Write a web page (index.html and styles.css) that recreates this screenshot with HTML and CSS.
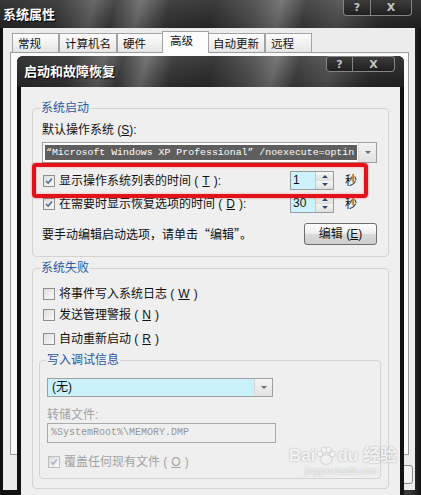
FILE: index.html
```html
<!DOCTYPE html>
<html lang="zh-CN">
<head>
    <meta charset="UTF-8">
    <meta name="viewport" content="width=device-width, initial-scale=1.0">
    <title>系统属性</title>
    <link rel="stylesheet" href="styles.css">
</head>
<body>
    <!-- janela de fundo: Propriedades do sistema -->
    <div class="win">
        <div class="titlebar">
            <span class="title">系统属性</span>
            <div class="caption">
                <span class="cap-btn help">?</span>
                <span class="cap-btn close">X</span>
            </div>
        </div>
        <div class="client">
            <div class="tabs">
                <span class="tab">常规</span>
                <span class="tab">计算机名</span>
                <span class="tab">硬件</span>
                <span class="tab active">高级</span>
                <span class="tab">自动更新</span>
                <span class="tab">远程</span>
            </div>
            <div class="panel"></div>
            <div class="foot"><span class="foot-btn"></span></div>
        </div>
    </div>

    <!-- dialogo por cima -->
    <div class="dialog">
        <div class="dlg-title">
            <span class="title">启动和故障恢复</span>
            <div class="caption">
                <span class="cap-btn help">?</span>
                <span class="cap-btn close">X</span>
            </div>
        </div>

        <div class="dlg-body">
            <fieldset class="group g1">
                <legend>系统启动</legend>
                <div class="lbl">默认操作系统 (<u>S</u>):</div>
                <div class="combo os">
                    <span class="combo-val">“Microsoft Windows XP Professional” /noexecute=optin</span>
                    <span class="combo-arrow"><i class="tri"></i></span>
                </div>

                <div class="row r1">
                    <span class="check">
                        <span class="box"><svg viewBox="0 0 12 12"><polyline points="2.5,6 5,8.5 9.5,3"/></svg></span>
                        显示操作系统列表的时间 (<u>T</u>):
                    </span>
                    <span class="spin"><span class="val">1</span><span class="arrows"><i class="up"></i><i class="down"></i></span></span>
                    <span class="unit">秒</span>
                </div>
                <div class="row r2">
                    <span class="check">
                        <span class="box"><svg viewBox="0 0 12 12"><polyline points="2.5,6 5,8.5 9.5,3"/></svg></span>
                        在需要时显示恢复选项的时间 (<u>D</u>):
                    </span>
                    <span class="spin"><span class="val">30</span><span class="arrows"><i class="up"></i><i class="down"></i></span></span>
                    <span class="unit">秒</span>
                </div>

                <div class="edit-row">
                    <span>要手动编辑启动选项，请单击<span class="cjk">“编辑”</span>。</span>
                    <span class="btn-edit">编辑 (<u>E</u>)</span>
                </div>
            </fieldset>

            <fieldset class="group g2">
                <legend>系统失败</legend>
                <div class="row cb1">
                    <span class="check"><span class="box"></span>将事件写入系统日志 (<u>W</u>)</span>
                </div>
                <div class="row cb2">
                    <span class="check"><span class="box"></span>发送管理警报 (<u>N</u>)</span>
                </div>
                <div class="row cb3">
                    <span class="check"><span class="box"></span>自动重新启动 (<u>R</u>)</span>
                </div>

                <fieldset class="group sub">
                    <legend>写入调试信息</legend>
                    <div class="combo dump-type">
                        <span class="combo-val">(无)</span>
                        <span class="combo-arrow"><i class="tri"></i></span>
                    </div>
                    <div class="lbl off">转储文件:</div>
                    <div class="field">%SystemRoot%\MEMORY.DMP</div>
                    <div class="row cb4">
                        <span class="check off">
                            <span class="box"><svg viewBox="0 0 12 12"><polyline points="2.5,6 5,8.5 9.5,3"/></svg></span>
                            覆盖任何现有文件 (<u>O</u>)
                        </span>
                    </div>
                </fieldset>
            </fieldset>
        </div>

        <!-- marcacao vermelha do print -->
        <div class="mark"></div>

        <div class="watermark">
            <span class="wm-logo">Bai<svg class="paw" viewBox="0 0 20 20">
                <circle cx="4" cy="8" r="2.2"/><circle cx="8" cy="4" r="2.2"/>
                <circle cx="12.5" cy="4" r="2.2"/><circle cx="16.5" cy="8" r="2.2"/>
                <ellipse cx="10.2" cy="13.5" rx="5" ry="4.2"/>
            </svg>du 经验</span>
            <small>jingyan.baidu.com</small>
        </div>
    </div>
</body>
</html>
```

FILE: styles.css
```css
* {
    box-sizing: border-box;
}

body {
    margin: 0;
    width: 421px;
    height: 495px;
    overflow: hidden;
    position: relative;
    background: #1c1c1c;
    font-family: "Liberation Sans", "Noto Sans CJK SC", sans-serif;
    font-size: 12px;
    line-height: 14px;
    color: #111;
}

u {
    text-decoration: underline;
}

.cjk {
    font-family: "Noto Sans CJK SC", sans-serif;
}

/* ---------- janela de fundo ---------- */

.win {
    height: 495px;
    display: flex;
    flex-direction: column;
    background: linear-gradient(90deg, #101010 0%, #262626 50%, #3a3a3a 97%, #111 100%);
}

.titlebar,
.dlg-title {
    display: flex;
    justify-content: space-between;
    align-items: flex-start;
    background:
        linear-gradient(180deg, rgba(255, 255, 255, 0.08), rgba(0, 0, 0, 0.15)),
        linear-gradient(103deg, #262626 0%, #333 14%, #5d5d5d 22%, #3a3a3a 27%, #6a6a6a 33%, #333 40%,
            #2b2b2b 50%, #4d4d4d 60%, #6d6d6d 66%, #3b3b3b 72%, #505050 80%, #2a2a2a 90%, #222 100%);
}

.titlebar {
    height: 28px;
    padding: 0 9px 0 3px;
}

.title {
    margin-top: 7px;
    font-family: "Noto Sans CJK SC", sans-serif;
    font-weight: bold;
    font-size: 13px;
    color: #fff;
    text-shadow: 1px 1px 1px #000;
}

.caption {
    display: flex;
}

.cap-btn {
    height: 16px;
    border: 1px solid #858585;
    border-top: none;
    background: linear-gradient(#3c3c3c, #1f1f1f);
    color: #c4c4c4;
    font-family: "DejaVu Sans", sans-serif;
    font-weight: bold;
    font-size: 11px;
    line-height: 15px;
    text-align: center;
}

.cap-btn.help {
    width: 28px;
    border-radius: 0 0 0 4px;
}

.cap-btn.close {
    width: 41px;
    border-left: none;
    border-radius: 0 0 4px 0;
}

.client {
    flex: 1;
    margin: 0 6px 5px 3px;
    padding: 0 6px 0 7px;
    background: #ececec;
    display: flex;
    flex-direction: column;
}

.tabs {
    display: flex;
    align-items: flex-end;
    padding: 3px 0 0 2px;
    height: 25px;
}

.tab {
    height: 19px;
    min-width: 47px;
    margin-bottom: 1px;
    padding: 0 5px;
    border: 1px solid #a3a3a3;
    border-bottom: none;
    background: linear-gradient(#fdfdfd, #e6e6e6);
    font-family: "Noto Sans CJK SC", sans-serif;
    font-size: 11.5px;
    line-height: 18px;
    white-space: nowrap;
}

.tab.active {
    height: 22px;
    margin: 0 -2px;
    position: relative;
    z-index: 1;
    background: #fcfcfc;
    padding-left: 7px;
    line-height: 16px;
}

.panel {
    height: 403px;
    margin-top: -1px;
    border: 1px solid #9c9c9c;
    background: #fcfcfc;
}

.foot {
    display: flex;
    justify-content: flex-end;
    margin: 10px -4px 0 0;
}

.foot-btn {
    width: 70px;
    height: 19px;
    border: 1px solid #8a8a8a;
    border-radius: 3px;
    background: #f2f2f2;
}

/* ---------- dialogo ---------- */

.dialog {
    position: absolute;
    left: 17px;
    top: 56px;
    width: 387px;
    height: 445px;
    padding: 0 4px;
    border-radius: 6px 6px 0 0;
    background: #121212;
    display: flex;
    flex-direction: column;
    overflow: hidden;
}

.dlg-title {
    height: 31px;
    margin: 0 -4px;
    padding: 0 9px 0 7px;
}

.dlg-title .title {
    margin-top: 8px;
}

.dlg-title .cap-btn {
    border-top: 1px solid #858585;
}

.dlg-title .cap-btn.help {
    width: 27px;
    border-radius: 3px 0 0 4px;
}

.dlg-title .cap-btn.close {
    width: 42px;
    border-radius: 0 3px 4px 0;
}

.dlg-body {
    flex: 1;
    padding: 0 11px;
    background: #efefef;
}

.group {
    margin: 14px 0 0;
    padding: 0 10px 11px 9px;
    border: 1px solid #d3d3d3;
    border-radius: 4px;
    min-width: 0;
}

.group legend {
    padding: 0 1px;
    margin-left: -2px;
    color: #2858a6;
    line-height: 14px;
}

.g2 {
    margin-top: 4px;
    padding-bottom: 9px;
}

.sub {
    margin: 7px -3px 0;
    padding: 0 7px 9px 7px;
}

.sub legend {
    margin-left: -1px;
}

.lbl {
    margin-top: 8px;
}

.lbl.off {
    margin-top: 11px;
    color: #a2a2a2;
}

.combo {
    display: flex;
    border: 1px solid #a0a0a0;
    background: #fff;
}

.combo.os {
    margin-top: 5px;
    width: 335px;
    height: 21px;
}

.combo.os .combo-val {
    flex: 1;
    margin: 2px 1px 2px 2px;
    padding-left: 1px;
    background: #5e5e5e;
    color: #fff;
    font-family: "Liberation Mono", monospace;
    font-size: 9.9px;
    line-height: 15px;
    white-space: nowrap;
    overflow: hidden;
}

.combo-arrow {
    width: 18px;
    display: flex;
    justify-content: center;
    align-items: center;
    background: linear-gradient(#f3f3f3, #e2e2e2);
    border-left: 1px solid #d6d6d6;
}

.tri {
    border-left: 3px solid transparent;
    border-right: 3px solid transparent;
    border-top: 3px solid #6a6a6a;
}

.combo.dump-type {
    margin-top: 11px;
    width: 226px;
    height: 19px;
    background: #c8f1f9;
}

.dump-type .combo-val {
    flex: 1;
    padding-left: 4px;
    line-height: 17px;
}

.field {
    margin-top: 1px;
    width: 229px;
    height: 20px;
    padding-left: 3px;
    border: 1px solid #a9a9a9;
    color: #959595;
    font-family: "Liberation Mono", monospace;
    font-size: 10px;
    line-height: 18px;
}

.row {
    display: flex;
    align-items: center;
    height: 14px;
}

.r1,
.r2 {
    height: 19px;
}

.r1 {
    margin-top: 8px;
}

.r2 {
    margin-top: 4px;
}

.cb1 {
    margin-top: 12px;
}

.cb2 {
    margin-top: 7px;
}

.cb3 {
    margin-top: 10px;
}

.cb4 {
    margin-top: 12px;
}

.check {
    display: flex;
    align-items: center;
    gap: 4px;
    white-space: nowrap;
}

.box {
    width: 12px;
    height: 12px;
    margin-left: 1px;
    border: 1px solid #8e8e8e;
    background: linear-gradient(135deg, #dcdcdc, #fbfbfb);
}

.box svg {
    display: block;
    width: 10px;
    height: 10px;
}

.box polyline {
    fill: none;
    stroke: #51699a;
    stroke-width: 1.8;
}

.check.off {
    color: #a2a2a2;
}

.check.off .box {
    border-color: #bdbdbd;
}

.check.off .box polyline {
    stroke: #a4b2c9;
}

.spin {
    margin-left: auto;
    width: 44px;
    height: 19px;
    display: flex;
    border: 1px solid #9b9b9b;
    background: #ccf3fb;
}

.spin .val {
    flex: 1;
    padding-left: 2px;
    line-height: 17px;
}

.arrows {
    width: 18px;
    display: flex;
    flex-direction: column;
    border-left: 1px solid #c9c9c9;
}

.arrows i {
    flex: 1;
    display: flex;
    justify-content: center;
    align-items: center;
    background: linear-gradient(#f7f7f7, #dedede);
}

.arrows i::after {
    content: "";
    border-left: 3px solid transparent;
    border-right: 3px solid transparent;
}

.arrows .up::after {
    border-bottom: 3px solid #33466b;
}

.arrows .down::after {
    border-top: 3px solid #33466b;
}

.unit {
    width: 33px;
    margin-left: 11px;
}

.edit-row {
    margin-top: 10px;
    height: 22px;
    display: flex;
    justify-content: space-between;
    align-items: center;
}

.btn-edit {
    width: 73px;
    height: 22px;
    margin-right: 1px;
    border: 1px solid #6e6e6e;
    border-radius: 3px;
    background: linear-gradient(#fefefe, #ececec 50%, #dadada 51%, #cdcdcd);
    text-align: center;
    line-height: 20px;
}

.mark {
    position: absolute;
    left: 15px;
    top: 107px;
    width: 336px;
    height: 35px;
    border: 4px solid #e2121b;
    border-radius: 4px;
    box-shadow: 0 0 2px rgba(230, 20, 20, 0.7), inset 0 0 3px rgba(255, 110, 110, 0.6);
}

.watermark {
    position: absolute;
    left: 272px;
    top: 390px;
    color: rgba(255, 255, 255, 0.85);
    font-family: "Liberation Sans", "Noto Sans CJK SC", sans-serif;
    font-weight: bold;
    white-space: nowrap;
    text-shadow: 0 0 2px rgba(110, 110, 110, 0.6);
}

.wm-logo {
    display: flex;
    align-items: center;
    font-size: 17px;
    line-height: 20px;
}

.paw {
    width: 20px;
    height: 20px;
    margin: 0 1px;
    fill: rgba(255, 255, 255, 0.85);
    filter: drop-shadow(0 0 1px rgba(110, 110, 110, 0.7));
}

.watermark small {
    display: block;
    margin-left: 16px;
    font-size: 9px;
    line-height: 11px;
    font-weight: normal;
}
```
